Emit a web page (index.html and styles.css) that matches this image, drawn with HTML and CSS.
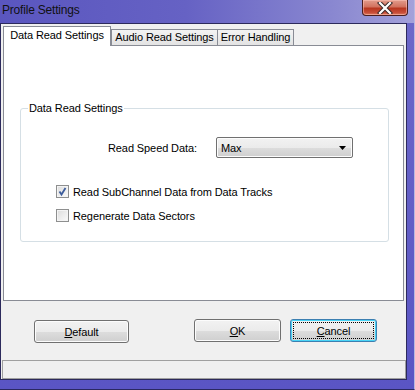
FILE: index.html
```html
<!DOCTYPE html>
<html>
	<head>
		<meta charset="utf-8">
		<title>Profile Settings</title>
		<link rel="stylesheet" href="styles.css">
	</head>
	<body>
		<!-- 对话框外框 -->
		<div class="window">
			<div class="titlebar">
				<span class="title">Profile Settings</span>
				<div class="close">
					<svg width="16" height="12" viewBox="0 0 16 12">
						<path d="M3 1 L13 11 M13 1 L3 11" stroke="#3b2a2a" stroke-width="4.2" stroke-linecap="square"/>
						<path d="M3 1 L13 11 M13 1 L3 11" stroke="#ffffff" stroke-width="2.2" stroke-linecap="square"/>
					</svg>
				</div>
			</div>
			<div class="client">
				<!-- 选项卡 -->
				<div class="tabs">
					<div class="tab active">Data Read Settings</div>
					<div class="tab audio">Audio Read Settings</div>
					<div class="tab error">Error Handling</div>
				</div>
				<div class="panel">
					<fieldset class="group">
						<legend>Data Read Settings</legend>
						<div class="speed-row">
							<span class="speed-label">Read Speed Data:</span>
							<div class="select">
								<span>Max</span>
								<svg width="7" height="4" viewBox="0 0 7 4"><path d="M0 0 H7 L3.5 4 Z" fill="#000"/></svg>
							</div>
						</div>
						<div class="check-row first">
							<span class="check">
								<svg width="11" height="11" viewBox="0 0 11 11"><path d="M2.5 5.5 L4.5 8.5 L8.5 2" stroke="#3d5d9c" stroke-width="1.8" fill="none"/></svg>
							</span>
							Read SubChannel Data from Data Tracks
						</div>
						<div class="check-row">
							<span class="check"></span>
							Regenerate Data Sectors
						</div>
					</fieldset>
				</div>
				<!-- 按钮 -->
				<div class="buttons">
					<div class="btn default"><span><u>D</u>efault</span></div>
					<div class="btn ok"><span><u>O</u>K</span></div>
					<div class="btn cancel"><span><u>C</u>ancel</span></div>
				</div>
				<div class="statusbar"></div>
			</div>
		</div>
	</body>
</html>
```

FILE: styles.css
```css
* {
	padding: 0;
	margin: 0;
	box-sizing: border-box;
}
body {
	font-family: "Liberation Sans", Arial, sans-serif;
	font-size: 11px;
	letter-spacing: -0.1px;
	color: #000;
	background: #fff;
}
.window {
	width: 415px;
	height: 390px;
	display: flex;
	flex-direction: column;
	background: linear-gradient(to bottom, #6d69c9, #5a55c4);
	border-right: 1px solid #b8b8e0;
	border-bottom: 1px solid #2a2860;
}
.titlebar {
	height: 23px;
	display: flex;
	justify-content: space-between;
	align-items: flex-start;
	background: linear-gradient(to right, #5a56bf 0%, #6662c4 45%, #8987d0 80%, #a3a1da 100%);
}
.title {
	font-size: 12px;
	letter-spacing: -0.2px;
	line-height: 20px;
	padding-left: 2px;
	color: #111;
}
.close {
	width: 46px;
	height: 16px;
	margin-right: 6px;
	border: 1px solid #4a1e1e;
	border-top: none;
	border-radius: 0 0 4px 4px;
	background: linear-gradient(to bottom, #e29c8c 0%, #d2725f 45%, #b8361f 55%, #c84f3a 85%, #e07f62 100%);
	display: flex;
	justify-content: center;
	align-items: center;
	box-shadow: inset 0 0 0 1px rgba(255, 200, 190, 0.5);
}
.client {
	width: 407px;
	height: 357px;
	background: #f0f0f0;
	border: 1px solid #2c2a5c;
	display: flex;
	flex-direction: column;
}
.tabs {
	display: flex;
	align-items: flex-end;
	height: 19px;
	margin: 2px 0 0 2px;
}
.tab {
	height: 16px;
	line-height: 15px;
	text-align: center;
	border: 1px solid #898c95;
	border-bottom: none;
	background: linear-gradient(to bottom, #f3f3f3, #e3e3e3);
}
.tab.active {
	position: relative;
	width: 108px;
	height: 20px;
	margin-bottom: -1px;
	line-height: 16px;
	background: #fff;
	z-index: 1;
}
.tab.audio {
	width: 107px;
}
.tab.error {
	width: 77px;
	margin-left: -1px;
}
.panel {
	width: 401px;
	height: 256px;
	margin-left: 2px;
	background: #fff;
	border: 1px solid #898c95;
}
.group {
	width: 369px;
	height: 140px;
	margin: 56px 0 0 16px;
	border: 1px solid #d5dfe5;
	border-radius: 3px;
	padding: 0;
}
.group legend {
	margin-left: 7px;
	padding: 0 1px;
	line-height: 13px;
}
.speed-row {
	display: flex;
	align-items: center;
	margin-top: 22px;
}
.speed-label {
	margin-left: 87px;
	width: 108px;
}
.select {
	width: 137px;
	height: 21px;
	border: 1px solid #707070;
	border-radius: 2px;
	background: linear-gradient(to bottom, #f2f2f2 0%, #ebebeb 50%, #dddddd 51%, #cfcfcf 100%);
	box-shadow: inset 0 0 0 1px #fcfcfc;
	display: flex;
	align-items: center;
	justify-content: space-between;
	padding: 0 6px 0 4px;
}
.check-row {
	display: flex;
	align-items: center;
	height: 13px;
	margin: 11px 0 0 35px;
}
.check-row.first {
	margin-top: 27px;
}
.check {
	width: 13px;
	height: 13px;
	margin-right: 4px;
	border: 1px solid #8e8f8f;
	background: linear-gradient(135deg, #dcdcdc, #fbfbfb);
	box-shadow: inset 0 0 0 1px #f4f4f4;
	display: flex;
	align-items: center;
	justify-content: center;
}
.buttons {
	height: 58px;
	display: flex;
	align-items: flex-start;
	padding-top: 18px;
}
.btn {
	height: 23px;
	border: 1px solid #707070;
	border-radius: 3px;
	background: linear-gradient(to bottom, #f2f2f2 0%, #ebebeb 50%, #dddddd 51%, #cfcfcf 100%);
	box-shadow: inset 0 0 0 1px #fcfcfc;
	display: flex;
	align-items: center;
	justify-content: center;
}
.btn.default {
	width: 95px;
	margin: 1px 0 0 33px;
}
.btn.ok {
	width: 87px;
	margin-left: 65px;
}
.btn.cancel {
	width: 87px;
	margin-left: 9px;
	border-color: #3c7fb1;
	box-shadow: inset 0 0 0 1px #48d4f6;
	padding: 2px;
}
.btn.cancel span {
	flex: 1;
	align-self: stretch;
	display: flex;
	align-items: center;
	justify-content: center;
	border: 1px dotted #000;
}
.statusbar {
	width: 404px;
	height: 19px;
	margin: 1px 0 0 1px;
	border: 1px solid #a0a0a0;
	background: #f0f0f0;
}
```
